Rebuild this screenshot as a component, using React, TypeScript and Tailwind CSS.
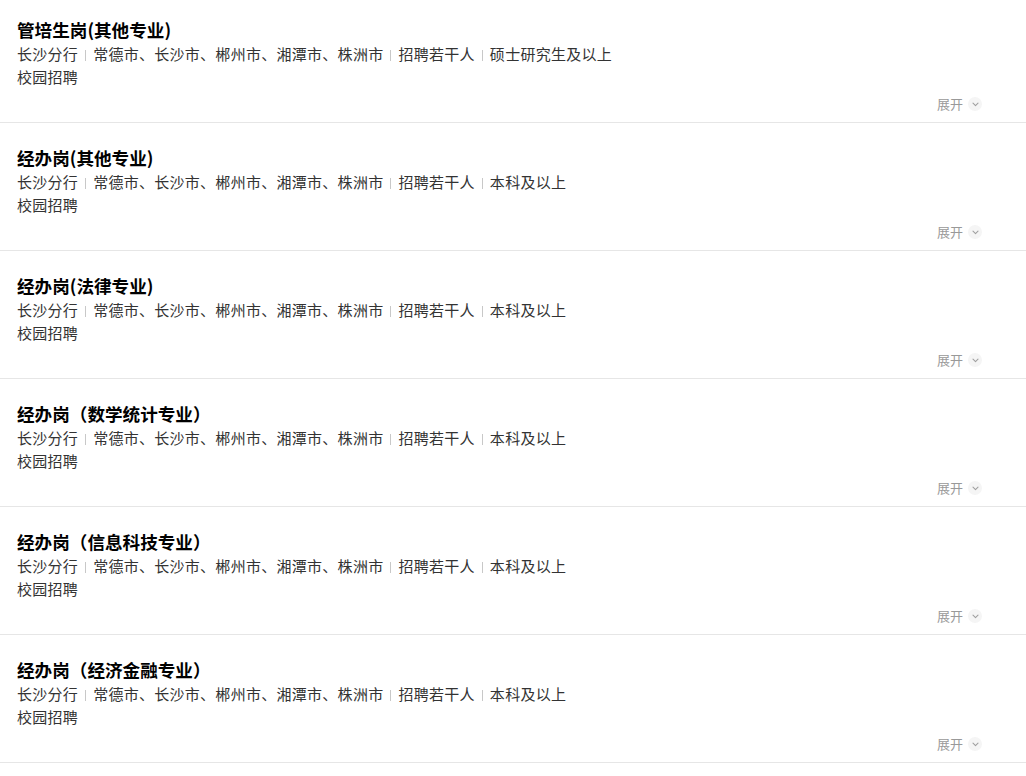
const jobs = [
  { title: "管培生岗(其他专业)", degree: "硕士研究生及以上" },
  { title: "经办岗(其他专业)", degree: "本科及以上" },
  { title: "经办岗(法律专业)", degree: "本科及以上" },
  { title: "经办岗（数学统计专业）", degree: "本科及以上" },
  { title: "经办岗（信息科技专业）", degree: "本科及以上" },
  { title: "经办岗（经济金融专业）", degree: "本科及以上" },
];

const font = { fontFamily: '"Noto Sans CJK SC", "Noto Sans", sans-serif' };

function Sep() {
  return <span className="mx-[7px] inline-block h-[11px] w-px bg-[#c8c8c8] align-[-1px]" />;
}

function JobItem({ title, degree, first }: { title: string; degree: string; first: boolean }) {
  return (
    <div className={`border-b border-[#e6e6e6] pl-[17px] pr-[44px] pb-[8px] ${first ? "pt-[17px]" : "pt-[22px]"}`}>
      <div className="text-[17.6px] leading-[25px] font-bold text-black">{title}</div>
      <div className="text-[15px] leading-[23px] text-[#333] tracking-[0.28px]">
        长沙分行
        <Sep />
        常德市、长沙市、郴州市、湘潭市、株洲市
        <Sep />
        招聘若干人
        <Sep />
        {degree}
      </div>
      <div className="text-[15px] leading-[23px] text-[#333] tracking-[0.28px]">校园招聘</div>
      <div className="mt-[6px] flex h-[20px] items-center justify-end">
        <span className="text-[13px] text-[#999]">展开</span>
        <span className="ml-[5px] flex h-[14px] w-[14px] items-center justify-center rounded-full bg-[#f5f5f5]">
          <svg width="7" height="5" viewBox="0 0 7 5" fill="none">
            <path d="M1 1.2 L3.5 3.6 L6 1.2" stroke="#a0a0a0" strokeWidth="1.1" strokeLinecap="round" strokeLinejoin="round" />
          </svg>
        </span>
      </div>
    </div>
  );
}

export default function App() {
  return (
    <div className="min-h-[776px] w-full bg-white" style={font}>
      {jobs.map((job, i) => (
        <JobItem key={i} title={job.title} degree={job.degree} first={i === 0} />
      ))}
    </div>
  );
}
